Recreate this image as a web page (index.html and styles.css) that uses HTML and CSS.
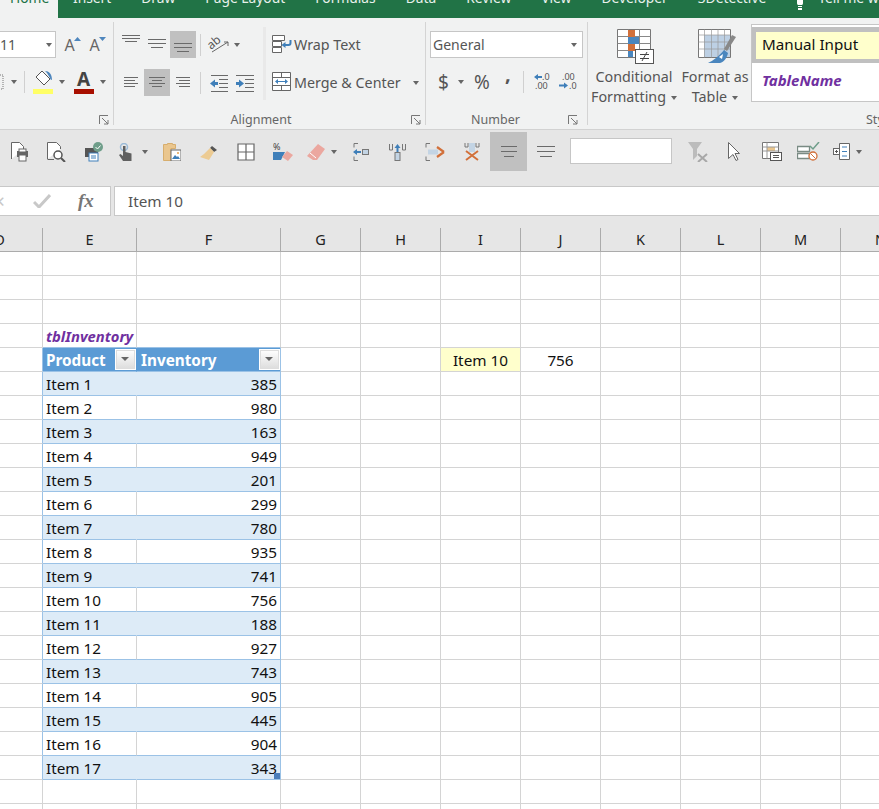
FILE: index.html
```html
<!DOCTYPE html>
<html lang="en">
<head>
<meta charset="utf-8">
<title>Excel</title>
<link rel="stylesheet" href="styles.css">
</head>
<body>
<nav class="tabs">
  <span class="tab home">Home</span><span class="tab">Insert</span><span class="tab">Draw</span><span class="tab">Page Layout</span><span class="tab">Formulas</span><span class="tab">Data</span><span class="tab">Review</span><span class="tab">View</span><span class="tab">Developer</span><span class="tab">3Detective</span>
  <span class="tab tell"><svg width="10" height="18" viewBox="0 0 10 18"><path d="M2 0h6v3a2 2 0 0 1-1 2H3a2 2 0 0 1-1-2zM3 6h4v1H3zM3 8h4v2H3z" fill="#fff"/></svg><span>Tell me what</span></span>
</nav>

<section class="ribbon">
  <div class="grp g-font">
    <div class="rows">
      <div class="row">
        <div class="combo sizebox"><span>11</span><i class="caret"></i></div>
        <span class="growA">A<svg width="7" height="4" viewBox="0 0 7 4"><path d="M0 4L3.500 0 7 4z" fill="#4e86bd"/></svg></span>
        <span class="growA">A<svg width="7" height="4" viewBox="0 0 7 4"><path d="M0 0L7 0 3.500 4z" fill="#4e86bd"/></svg></span>
      </div>
      <div class="row row2f">
        <svg class="clipb" width="4" height="18" viewBox="0 0 4 18"><path d="M0 2h3v14H0" fill="none" stroke="#777" stroke-dasharray="1 1"/></svg>
        <i class="caret c1"></i>
        <i class="vsep s1"></i>
        <svg class="fillb" width="20" height="26" viewBox="0 0 20 26"><path d="M9 2l8 8-6 6-8-8z" fill="#fff" stroke="#555"/><path d="M12 2c4 0 7 3 7 9-1 0-2-1-2-2l-3-5z" fill="#4e86bd"/><rect y="20" width="20" height="5" fill="#ffff66"/></svg>
        <i class="caret c2"></i>
        <span class="fontA"><b>A</b><i class="redbar"></i></span>
        <i class="caret c3"></i>
      </div>
    </div>
    <footer class="glabel"><span></span><svg class="launch" width="10" height="10" viewBox="0 0 10 10"><path d="M.5 9V.5H9M3 3l6 6M5 9h4V5" fill="none" stroke="#777"/></svg></footer>
  </div>

  <div class="grp g-align">
    <div class="align-body">
      <div class="agrid">
        <span class="rb"><svg width="26" height="27" viewBox="0 0 26 27"><path d="M4 4.500h18M4 7.500h18M7 10.500h12" stroke="#6a6a6a"/></svg></span>
        <span class="rb"><svg width="26" height="27" viewBox="0 0 26 27"><path d="M4 8.500h18M4 12.500h18M7 16.500h12" stroke="#6a6a6a"/></svg></span>
        <span class="rb on"><svg width="26" height="27" viewBox="0 0 26 27"><path d="M4 12.500h18M4 16.500h18M7 20.500h12" stroke="#6a6a6a"/></svg></span>
        <i class="agsep"></i>
        <span class="rb orient"><svg width="24" height="27" viewBox="0 0 24 27"><text x="1" y="15" class="abt" transform="rotate(-40 8 13)">ab</text><path d="M5 21L21 11M17 11h4v4" fill="none" stroke="#666"/></svg><i class="caret"></i></span>
        <span class="rb"></span>
        <span class="rb"><svg width="26" height="27" viewBox="0 0 26 27"><path d="M6 8.500h14M6 11.500h11M6 14.500h14M6 17.500h11" stroke="#6a6a6a"/></svg></span>
        <span class="rb on"><svg width="26" height="27" viewBox="0 0 26 27"><path d="M5 8.500h16M8 11.500h10M5 14.500h16M8 17.500h10" stroke="#6a6a6a"/></svg></span>
        <span class="rb"><svg width="26" height="27" viewBox="0 0 26 27"><path d="M6 8.500h14M9 11.500h11M6 14.500h14M9 17.500h11" stroke="#6a6a6a"/></svg></span>
        <i class="agsep"></i>
        <span class="rb"><svg width="20" height="20" viewBox="0 0 20 20"><path d="M2 2.500h17M10 6.500h9M10 10.500h9M10 14.500h9M2 18.500h17" stroke="#6a6a6a"/><path d="M1 10.500l5-4v2.500h3v3H6v2.500z" fill="#3f7fb9"/></svg></span>
        <span class="rb"><svg width="20" height="20" viewBox="0 0 20 20"><path d="M1 2.500h18M10 6.500h9M10 10.500h9M10 14.500h9M1 18.500h18" stroke="#6a6a6a"/><path d="M9 10.500l-5-4v2.500H1v3h3v2.500z" fill="#3f7fb9"/></svg></span>
      </div>
      <div class="wraps">
        <div class="wline"><svg width="20" height="19" viewBox="0 0 20 19"><path d="M.5.500h12v5H.5zM.5 6.500h9v5H.5zM.5 12.500h9v5H.5z" fill="#fff" stroke="#666"/><path d="M18.500 5v3a2 2 0 0 1-2 2H12" fill="none" stroke="#3f7fb9" stroke-width="2"/><path d="M9.500 10l4-3v6z" fill="#3f7fb9"/></svg><span>Wrap Text</span></div>
        <div class="wline"><svg class="mergei" width="20" height="19" viewBox="0 0 20 19"><path d="M.5.500h18v18H.5zM.5 5.500h18M.5 13.500h18M9.500.5v5M9.500 13.500v5" fill="#fff" stroke="#666"/><path d="M4 9.500h11" stroke="#3f7fb9"/><path d="M3 9.500l3-2.500v5zM16 9.500L13 7v5z" fill="#3f7fb9"/></svg><span>Merge &amp; Center</span><i class="caret mc"></i></div>
      </div>
    </div>
    <footer class="glabel"><span>Alignment</span><svg class="launch" width="10" height="10" viewBox="0 0 10 10"><path d="M.5 9V.5H9M3 3l6 6M5 9h4V5" fill="none" stroke="#777"/></svg></footer>
  </div>

  <div class="grp g-num">
    <div class="rows">
      <div class="combo general"><span>General</span><i class="caret"></i></div>
      <div class="row numrow">
        <span class="dollar">$</span><i class="caret"></i>
        <span class="pct">%</span><span class="comma">,</span>
        <i class="vsep"></i>
        <svg width="17" height="17" viewBox="0 0 17 17"><text x="8" y="7" class="dec">.0</text><text x="1" y="16" class="dec">.00</text><path d="M0 4l4-3v2h4v2H4v2z" fill="#3f7fb9"/></svg>
        <svg class="dec2" width="18" height="17" viewBox="0 0 18 17"><text x="3" y="7" class="dec">.00</text><text x="10" y="16" class="dec">.0</text><path d="M9 12.500l-4-3v2H0v2h5v2z" fill="#3f7fb9"/></svg>
      </div>
    </div>
    <footer class="glabel"><span>Number</span><svg class="launch" width="10" height="10" viewBox="0 0 10 10"><path d="M.5 9V.5H9M3 3l6 6M5 9h4V5" fill="none" stroke="#777"/></svg></footer>
  </div>

  <div class="grp g-style">
    <div class="bigs">
      <div class="big bcond">
        <svg class="bigi" width="37" height="35" viewBox="0 0 37 35"><path d="M.5.500h33v28H.5z" fill="#fff" stroke="#777"/><path d="M.5 7.500h33M.5 14.500h33M.5 21.500h33M11.500.5v28M22.500.5v28" stroke="#888" fill="none"/><rect x="11" y="1" width="7" height="7" fill="#d2703a"/><rect x="11" y="8" width="11" height="7" fill="#4a86be"/><rect x="11" y="15" width="7" height="7" fill="#d2703a"/><rect x="11" y="22" width="5" height="6" fill="#4a86be"/><rect x="18.500" y="20.500" width="18" height="14" fill="#fff" stroke="#555"/><path d="M23 25.500h9M23 29.500h9M30 23l-5 9" stroke="#444" fill="none"/></svg>
        <span class="bigt">Conditional<br>Formatting<i class="caret ci"></i></span>
      </div>
      <div class="big bfmt">
        <svg class="bigi" width="38" height="35" viewBox="0 0 38 35"><path d="M.5.500h32v28H.5z" fill="#fff" stroke="#777"/><rect x="6" y="6" width="26" height="22" fill="#bdd0e4"/><path d="M.5 6h32M.5 13h32M.5 20h32M6.500.5v28M13.500.5v28M20 .5v28M26.500.5v28" stroke="#999" fill="none" stroke-width=".7"/><path d="M38 8l-9 14-3-2 8-14z" fill="#888"/><path d="M26 21l4 3c-1 5-4 9-8 10H10c5-2 11-7 16-13z" fill="#4a86be"/><path d="M21 28l4-3-1 5z" fill="#fff"/></svg>
        <span class="bigt">Format as<br>Table<i class="caret ci"></i></span>
      </div>
      <div class="gallery">
        <div class="gal-sel"><div class="gal-yel">Manual Input</div></div>
        <div class="gal-name">TableName</div>
      </div>
    </div>
    <footer class="glabel stylab"><span>Styles</span></footer>
  </div>
</section>

<section class="qat">
  <span class="qb"><svg width="20" height="20" viewBox="0 0 20 20"><path d="M1.500 17V.5h8l4 4V7" fill="#fff" stroke="#666"/><path d="M7 9h11v6H7z" fill="#666"/><rect x="9" y="7" width="7" height="3" fill="#fff" stroke="#666"/><rect x="9" y="13" width="7" height="6" fill="#fff" stroke="#666"/></svg></span>
  <span class="qb"><svg width="20" height="20" viewBox="0 0 20 20"><path d="M.5 17V.5h9l4 4V7M.5 17.500H7" fill="#fff" stroke="#666"/><circle cx="11" cy="13" r="4" fill="#fff" stroke="#555" stroke-width="1.500"/><path d="M14 16l4 4" stroke="#555" stroke-width="2"/></svg></span>
  <span class="qb"><svg width="20" height="20" viewBox="0 0 20 20"><path d="M1 6h13v9H1z" fill="#555"/><rect x="5" y="11" width="9" height="8" fill="#fff" stroke="#3f7fb9"/><path d="M7 14h5M7 16h5" stroke="#3f7fb9"/><circle cx="14" cy="5" r="5" fill="#6f9e8a"/><path d="M11.500 5l2 2 3-3.500" stroke="#fff" fill="none"/></svg></span>
  <span class="qb wide"><svg width="18" height="18" viewBox="0 0 18 18"><circle cx="6" cy="4" r="3.500" fill="none" stroke="#9bbbd8" stroke-width="1.500"/><path d="M5 3h2.500v6l6 1.500V18H5L1 12l1.500-1L5 13z" fill="#606060"/></svg><i class="caret qc"></i></span>
  <span class="qb"><svg width="18" height="19" viewBox="0 0 18 19"><path d="M.5 2.500h4v-1h5v1h3v4H8v12H.5z" fill="#eac68e" stroke="#d7ae6e"/><rect x="8" y="8" width="10" height="11" fill="#fff" stroke="#666"/><path d="M9 17l3-4 2 2 1-1 2 3z" fill="#3f7fb9"/><circle cx="15" cy="11" r="1" fill="#e3a14e"/></svg></span>
  <span class="qb"><svg width="18" height="16" viewBox="0 0 18 16"><path d="M12 2l5 4-3 2-4-4z" fill="#555"/><path d="M10 4l4 4-5 8-9-3 4-3z" fill="#eccb93"/></svg></span>
  <span class="qb"><svg width="18" height="18" viewBox="0 0 18 18"><path d="M1 1h16v16H1zM9 1v16M1 9h16" fill="#fff" stroke="#666" stroke-width="1.200"/></svg></span>
  <span class="qb"><svg width="20" height="19" viewBox="0 0 20 19"><text x="0" y="8" class="pc2">%</text><path d="M0 10h12l-4 8H0z" fill="#3f7fb9"/><path d="M14 9l6 4-5 6-6-4z" fill="#eba79f"/></svg></span>
  <span class="qb wide"><svg width="18" height="16" viewBox="0 0 18 16"><path d="M11 0l7 5-8 11-4 0-6-4z" fill="#eba79f"/><path d="M3 9l6 5" stroke="#fff"/></svg><i class="caret qc"></i></span>
  <span class="qb"><svg width="16" height="18" viewBox="0 0 16 18"><path d="M5 .5H1v4M5 17.500H1v-4" fill="none" stroke="#777"/><rect x="9.500" y="6.500" width="6" height="5" fill="#c3d4e4" stroke="#777"/><path d="M0 9l4-3v2h4v2H4v2z" fill="#3f7fb9"/></svg></span>
  <span class="qb"><svg width="17" height="18" viewBox="0 0 17 18"><path d="M.5 1v6h3V1M13.500 1v6h3V1" fill="none" stroke="#777"/><rect x="6" y="9.500" width="5" height="8" fill="#c3d4e4" stroke="#777"/><path d="M8.500 1l3 4h-2v4h-2V5h-2z" fill="#3f7fb9"/></svg></span>
  <span class="qb"><svg width="20" height="18" viewBox="0 0 20 18"><path d="M5 .5H1v4M5 17.500H1v-4" fill="none" stroke="#777"/><rect x="3" y="6.500" width="10" height="5" fill="#c3d4e4"/><path d="M12 4l7 5M19 9l-7 5" fill="none" stroke="#d2703a" stroke-width="2.200"/></svg></span>
  <span class="qb"><svg width="16" height="18" viewBox="0 0 16 18"><path d="M1 0v4h3V0M12 0v4h3V0" fill="none" stroke="#777"/><rect x="5" y="0" width="6" height="9" fill="#c3d4e4"/><path d="M2 8l12 9M14 8L2 17" stroke="#d2703a" stroke-width="2"/></svg></span>
  <span class="qb on"><svg width="18" height="12" viewBox="0 0 18 12"><path d="M1 .5h16M1 5.500h16M4 10.500h10" stroke="#6a6a6a"/></svg></span>
  <span class="qb"><svg width="18" height="12" viewBox="0 0 18 12"><path d="M0 .5h18M0 5.500h18M3 10.500h12" stroke="#6a6a6a"/></svg></span>
  <span class="qinput"></span>
  <span class="qb"><svg width="20" height="20" viewBox="0 0 20 20"><path d="M0 0h14L9 7v7l-4 4V7z" fill="#bcbcbc"/><path d="M10 12l9 8M19 12l-9 8" stroke="#a8a8a8" stroke-width="2"/></svg></span>
  <span class="qb"><svg width="13" height="19" viewBox="0 0 13 19"><path d="M.5.500l11 11H7l3 6-2 1-3-6-4.500 4z" fill="#fff" stroke="#666"/></svg></span>
  <span class="qb"><svg width="20" height="19" viewBox="0 0 20 19"><path d="M.5.500h16v16H.5z" fill="#fff" stroke="#777"/><rect x="5" y="5" width="8" height="4" fill="#eac68e"/><path d="M.5 5h16M.5 9h16M5 .5v16" stroke="#999" fill="none"/><rect x="8.500" y="10.500" width="11" height="8" fill="#fff" stroke="#555"/><path d="M11 13.500h6M11 15.500h6" stroke="#555"/></svg></span>
  <span class="qb"><svg width="23" height="19" viewBox="0 0 23 19"><path d="M.5 4.500h12v5H.5zM.5 11.500h12v5H.5z" fill="#fff" stroke="#7a8b84" stroke-width="1.300"/><path d="M13 4l3 3 6-7" fill="none" stroke="#6f9e8a" stroke-width="1.500"/><circle cx="16" cy="14" r="4" fill="#fff" stroke="#d2703a" stroke-width="1.300"/><path d="M13.500 11.500l5 5" stroke="#d2703a"/></svg></span>
  <span class="qb wide"><svg width="17" height="17" viewBox="0 0 17 17"><path d="M6.500.5h10v16h-10z" fill="#fff" stroke="#666"/><rect x=".5" y="5.500" width="6" height="6" fill="#fff" stroke="#666"/><path d="M2 8.500h3M3.500 7v3" stroke="#555"/><path d="M9 4h5M9 8.500h5M9 13h5" stroke="#3f7fb9"/></svg><i class="caret qc"></i></span>
</section>

<section class="fbar">
  <div class="fbtns"><span class="fx-x">✕</span><svg class="fx-c" width="18" height="14" viewBox="0 0 18 14"><path d="M1 8l5 5L17 1" fill="none" stroke="#c8c8c8" stroke-width="3"/></svg><span class="fx-f">fx</span></div>
  <div class="finput">Item 10</div>
</section>

<div class="colhead">
  <span class="ch chd">D</span><span class="ch che">E</span><span class="ch chf">F</span><span class="ch">G</span><span class="ch">H</span><span class="ch">I</span><span class="ch">J</span><span class="ch">K</span><span class="ch">L</span><span class="ch">M</span><span class="ch">N</span>
</div>

<table class="sheet">
  <colgroup><col class="cd"><col class="ce"><col class="cf"><col class="cn"><col class="cn"><col class="cn"><col class="cn"><col class="cn"><col class="cn"><col class="cn"><col class="cn"></colgroup>
  <tr><td></td><td></td><td></td><td></td><td></td><td></td><td></td><td></td><td></td><td></td><td></td></tr>
  <tr><td></td><td></td><td></td><td></td><td></td><td></td><td></td><td></td><td></td><td></td><td></td></tr>
  <tr><td></td><td></td><td></td><td></td><td></td><td></td><td></td><td></td><td></td><td></td><td></td></tr>
  <tr class="above"><td></td><td class="tname">tblInventory</td><td></td><td></td><td></td><td></td><td></td><td></td><td></td><td></td><td></td></tr>
  <tr class="thead"><td></td><td>Product<i class="fbtn"></i></td><td>Inventory<i class="fbtn"></i></td><td></td><td></td><td class="yellow">Item 10</td><td class="mid">756</td><td></td><td></td><td></td><td></td></tr>
  <tr class="b"><td></td><td>Item 1</td><td>385</td><td></td><td></td><td></td><td></td><td></td><td></td><td></td><td></td></tr>
  <tr class="w"><td></td><td>Item 2</td><td>980</td><td></td><td></td><td></td><td></td><td></td><td></td><td></td><td></td></tr>
  <tr class="b"><td></td><td>Item 3</td><td>163</td><td></td><td></td><td></td><td></td><td></td><td></td><td></td><td></td></tr>
  <tr class="w"><td></td><td>Item 4</td><td>949</td><td></td><td></td><td></td><td></td><td></td><td></td><td></td><td></td></tr>
  <tr class="b"><td></td><td>Item 5</td><td>201</td><td></td><td></td><td></td><td></td><td></td><td></td><td></td><td></td></tr>
  <tr class="w"><td></td><td>Item 6</td><td>299</td><td></td><td></td><td></td><td></td><td></td><td></td><td></td><td></td></tr>
  <tr class="b"><td></td><td>Item 7</td><td>780</td><td></td><td></td><td></td><td></td><td></td><td></td><td></td><td></td></tr>
  <tr class="w"><td></td><td>Item 8</td><td>935</td><td></td><td></td><td></td><td></td><td></td><td></td><td></td><td></td></tr>
  <tr class="b"><td></td><td>Item 9</td><td>741</td><td></td><td></td><td></td><td></td><td></td><td></td><td></td><td></td></tr>
  <tr class="w"><td></td><td>Item 10</td><td>756</td><td></td><td></td><td></td><td></td><td></td><td></td><td></td><td></td></tr>
  <tr class="b"><td></td><td>Item 11</td><td>188</td><td></td><td></td><td></td><td></td><td></td><td></td><td></td><td></td></tr>
  <tr class="w"><td></td><td>Item 12</td><td>927</td><td></td><td></td><td></td><td></td><td></td><td></td><td></td><td></td></tr>
  <tr class="b"><td></td><td>Item 13</td><td>743</td><td></td><td></td><td></td><td></td><td></td><td></td><td></td><td></td></tr>
  <tr class="w"><td></td><td>Item 14</td><td>905</td><td></td><td></td><td></td><td></td><td></td><td></td><td></td><td></td></tr>
  <tr class="b"><td></td><td>Item 15</td><td>445</td><td></td><td></td><td></td><td></td><td></td><td></td><td></td><td></td></tr>
  <tr class="w"><td></td><td>Item 16</td><td>904</td><td></td><td></td><td></td><td></td><td></td><td></td><td></td><td></td></tr>
  <tr class="b last"><td></td><td>Item 17</td><td>343<i class="handle"></i></td><td></td><td></td><td></td><td></td><td></td><td></td><td></td><td></td></tr>
  <tr><td></td><td></td><td></td><td></td><td></td><td></td><td></td><td></td><td></td><td></td><td></td></tr>
  <tr><td></td><td></td><td></td><td></td><td></td><td></td><td></td><td></td><td></td><td></td><td></td></tr>
</table>
</body>
</html>
```
FILE: styles.css
```css
* { box-sizing: border-box; }
html, body { margin: 0; height: 809px; overflow: hidden; background: #fff; }
body { font-family: "Noto Sans", "Open Sans", sans-serif; color: #444; width: 879px; }
i { display: block; font-style: normal; }
svg { display: block; flex: none; }

.caret { width: 0; height: 0; border-left: 3.5px solid transparent; border-right: 3.5px solid transparent; border-top: 4px solid #666; flex: none; }

/* tabs */
.tabs { height: 18px; background: #217346; display: flex; overflow: hidden; }
.tab { color: #e8f1ec; font-size: 13.8px; line-height: 20px; height: 20px; margin-top: -12px; padding: 0 15px; white-space: nowrap; flex: none; }
.tab.home { background: #f1f2f2; color: #217346; width: 58px; padding: 0 0 0 10px; height: 40px; }
.tab.tell { display: flex; gap: 13px; margin-top: 0; margin-left: 14px; padding: 0; height: 18px; line-height: 0; }
.tell span { margin-top: -12px; line-height: 20px; height: 20px; display: block; }

/* ribbon */
.ribbon { height: 112px; background: #f1f2f2; border-bottom: 1px solid #d2d2d2; display: flex; overflow: hidden; }
.grp { height: 103px; margin-top: 4px; padding-top: 9px; border-right: 1px solid #d4d4d4; display: flex; flex-direction: column; flex: none; }
.g-font { width: 114px; }
.g-align { width: 312px; padding-left: 4px; }
.g-num { width: 162px; padding-left: 4px; padding-right: 5px; }
.g-style { width: 400px; border-right: 0; padding-top: 2px; }
.rows { display: flex; flex-direction: column; gap: 11px; height: 65px; }
.row { display: flex; align-items: center; height: 27px; }
.glabel { margin-top: auto; margin-bottom: -2px; height: 14px; padding-right: 21px; font-size: 12.5px; line-height: 14px; color: #666; display: flex; justify-content: center; position: relative; }
.launch { position: absolute; right: 4px; top: 2px; }

.combo { height: 27px; background: #fff; border: 1px solid #c6c6c6; display: flex; align-items: center; justify-content: space-between; font-size: 14px; color: #555; }
.sizebox { width: 67px; margin-left: -11px; padding: 0 3px 0 10px; }
.growA { width: 25px; display: flex; justify-content: center; font-size: 16px; line-height: 20px; color: #666; align-items: flex-start; }
.growA:first-of-type { margin-left: 4px; }
.growA svg { margin-left: -1px; margin-top: 2px; }
.clipb { margin-right: 7px; }
.row2f .c1 { margin-right: 7px; }
.vsep { width: 1px; height: 22px; background: #d0d0d0; flex: none; }
.row2f .s1 { margin-right: 8px; }
.row2f { margin-top: -1px; }
.row2f .c2 { margin: 0 7px 0 6px; }
.fontA { width: 21px; display: flex; flex-direction: column; align-items: center; margin-left: 1px; }
.fontA b { font-size: 19px; line-height: 19px; color: #444; font-weight: 700; }
.redbar { width: 20px; height: 5px; background: #a80f00; }
.row2f .c3 { margin-left: 6px; }

.align-body { display: flex; height: 65px; }
.agrid { display: grid; grid-template-columns: 26px 26px 26px 10px 26px 26px; grid-auto-rows: 27px; row-gap: 11px; width: 146px; }
.rb { display: flex; align-items: center; justify-content: center; position: relative; }
.rb.on { background: #c0c0c0; }
.agsep { width: 1px; height: 22px; background: #d0d0d0; align-self: center; margin-left: 4px; }
.orient { justify-content: flex-start; margin-left: 1px; width: 34px; }
.orient .caret { margin-left: 3px; }
.abt { font-family: "Noto Sans", sans-serif; font-size: 12px; fill: #555; }
.wraps { display: flex; flex-direction: column; gap: 11px; position: relative; padding-left: 8px; }
.wraps::before { content: ""; position: absolute; left: -1px; top: -4px; width: 3px; height: 73px; background: #e9e9e9; }
.wline { height: 27px; display: flex; align-items: center; gap: 2px; font-size: 14.3px; color: #555; white-space: nowrap; }
.mergei { margin-top: -3px; }
.mc { margin-left: 10px; }

.general { width: 153px; padding: 0 5px 0 2px; }
.numrow { padding-left: 8px; margin-top: -1px; }
.dollar { font-size: 19px; color: #555; width: 10px; line-height: 24px; }
.numrow .caret { margin: 0 9px 0 10px; }
.pct { font-size: 19px; color: #555; width: 18px; margin-left: 1px; }
.comma { font-size: 20px; font-weight: 700; color: #555; width: 9px; margin-left: 13px; line-height: 16px; margin-top: -16px; }
.numrow .vsep { margin: 0 10px 0 9px; }
.dec { font-family: "Noto Sans", sans-serif; font-size: 9px; fill: #555; }
.dec2 { margin-left: 8px; }

.bigs { display: flex; height: 84px; }
.big { display: flex; flex-direction: column; align-items: center; flex: none; padding-top: 5px; }
.bcond { width: 92px; }
.bfmt { width: 70px; }
.bigi { margin: 0 0 2px 3px; }
.bigt { font-size: 14.300px; line-height: 20px; text-align: center; color: #555; margin-top: 1px; white-space: nowrap; }
.ci { display: inline-block; margin-left: 5px; vertical-align: middle; }
.gallery { width: 300px; height: 78px; margin-left: 1px; background: #fff; border: 1px solid #c6c6c6; flex: none; }
.gal-sel { background: #c0c0c0; padding: 5px 0 4px 4px; margin-top: 2px; }
.gal-yel { background: #ffffcc; height: 27px; padding-left: 6px; font-size: 15.2px; line-height: 25px; color: #111; }
.gal-name { padding: 7px 0 0 10px; font-size: 15px; line-height: 20px; font-weight: 700; font-style: italic; color: #7030a0; }
.stylab { justify-content: flex-start; padding: 0 0 0 278px; }

/* quick access */
.qat { height: 43px; background: #e6e6e6; padding: 2px 0 0 1px; display: flex; }
.qb { width: 37px; height: 39px; display: flex; align-items: center; justify-content: center; flex: none; }
.qb.wide { width: 41px; justify-content: flex-start; padding-left: 6px; }
.qc { margin-left: 6px; }
.qb.on { background: #c0c0c0; }
.qinput { width: 102px; height: 26px; margin: 6px 7px 0 6px; background: #fff; border: 1px solid #c6c6c6; flex: none; }
.pc2 { font-family: "Noto Sans", sans-serif; font-size: 9px; fill: #444; }

/* formula bar */
.fbar { height: 43px; background: #e6e6e6; padding-top: 13px; display: flex; gap: 3px; }
.fbtns { width: 111px; height: 30px; background: #fff; border: 1px solid #c8c8c8; border-left: 0; display: flex; align-items: center; }
.fx-x { color: #c8c8c8; font-size: 15px; margin-left: -7px; width: 40px; }
.fx-c { margin-right: 27px; }
.fx-f { font-family: "Liberation Serif", serif; font-style: italic; font-weight: 700; font-size: 19px; color: #777; }
.finput { flex: 1; height: 30px; background: #fff; border: 1px solid #c8c8c8; border-right: 0; font-size: 15.3px; line-height: 28px; padding-left: 13px; color: #555; }

/* column heads */
.colhead { height: 36px; padding-top: 12px; background: #e6e6e6; display: flex; overflow: hidden; }
.ch { width: 80px; height: 24px; flex: none; border-right: 1px solid #ababab; border-bottom: 1px solid #ababab; font-size: 14.5px; line-height: 23px; text-align: center; color: #222; }
.chd { width: 86px; margin-left: -43px; }
.che { width: 94px; }
.chf { width: 144px; }

/* sheet */
.sheet { border-collapse: separate; border-spacing: 0; table-layout: fixed; width: 921px; }
.cd { width: 43px; }
.ce { width: 94px; }
.cf { width: 144px; }
.cn { width: 80px; }
.sheet td { height: 24px; padding: 0 3px; border-right: 1px solid #d4d4d4; border-bottom: 1px solid #d4d4d4; font-size: 15.3px; line-height: 22px; color: #111; white-space: nowrap; overflow: hidden; }
.above td:nth-child(2), .above td:nth-child(3) { border-bottom-color: #9bc2e6; }
.sheet .tname { font-weight: 700; font-style: italic; color: #7030a0; font-size: 14.8px; padding-top: 1px; }
.thead td:nth-child(1), .b td:nth-child(1), .w td:nth-child(1) { border-right-color: #9bc2e6; }
.thead td:nth-child(2), .thead td:nth-child(3) { background: #5b9bd5; color: #fff; font-weight: 700; position: relative; border-color: #5b9bd5; border-bottom-color: #9bc2e6; }
.thead td:nth-child(3) { border-right-color: #9bc2e6; padding-left: 4px; }
.fbtn { position: absolute; right: 0; top: 1px; width: 21px; height: 21px; background: linear-gradient(#fff, #dcdcdc); border: 1px solid #fff; box-shadow: inset 0 0 0 1px #ddd; }
.fbtn::after { content: ""; position: absolute; left: 5px; top: 7px; border-left: 4px solid transparent; border-right: 4px solid transparent; border-top: 4px solid #666; }
.b td:nth-child(2), .w td:nth-child(2), .b td:nth-child(3), .w td:nth-child(3) { border-bottom-color: #9bc2e6; }
.b td:nth-child(3), .w td:nth-child(3) { text-align: right; border-right-color: #9bc2e6; position: relative; }
.b td:nth-child(2) { background: #ddebf7; border-right-color: #ddebf7; }
.b td:nth-child(3) { background: #ddebf7; }
.yellow { background: #ffffcc; text-align: center; }
.mid { text-align: center; }
.handle { position: absolute; right: 0; bottom: 0; width: 6px; height: 6px; background: #4a7ebb; }
```
